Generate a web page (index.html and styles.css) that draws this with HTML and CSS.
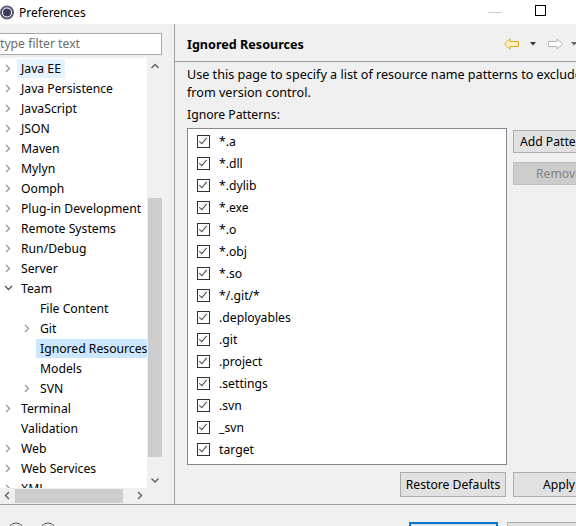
FILE: index.html
```html
<!DOCTYPE html>
<html>
<head>
<meta charset="utf-8">
<link rel="stylesheet" href="styles.css">
</head>
<body>
<div class="titlebar">
  <svg class="appicon" width="15" height="15" viewBox="0 0 15 15">
    <circle cx="7" cy="7.5" r="7" fill="#5a5a78"/>
    <circle cx="7" cy="7.5" r="5" fill="#fff"/>
    <circle cx="7" cy="7.5" r="4" fill="#3c3c5c"/>
  </svg>
  <span class="title">Preferences</span>
  <span class="spacer"></span>
  <span class="minimize"></span>
  <span class="maximize"></span>
</div>
<div class="main">
  <div class="left">
    <div class="filter">type filter text</div>
    <div class="tree">
      <div class="viewport">
        <div class="ti"><span class="arr"><svg width="6" height="9" viewBox="0 0 6 9"><polyline points="1,1 4.5,4.5 1,8" fill="none" stroke="#9a9a9a" stroke-width="1.3"/></svg></span><span class="lbl hover">Java EE</span></div>
        <div class="ti"><span class="arr"><svg width="6" height="9" viewBox="0 0 6 9"><polyline points="1,1 4.5,4.5 1,8" fill="none" stroke="#9a9a9a" stroke-width="1.3"/></svg></span><span class="lbl">Java Persistence</span></div>
        <div class="ti"><span class="arr"><svg width="6" height="9" viewBox="0 0 6 9"><polyline points="1,1 4.5,4.5 1,8" fill="none" stroke="#9a9a9a" stroke-width="1.3"/></svg></span><span class="lbl">JavaScript</span></div>
        <div class="ti"><span class="arr"><svg width="6" height="9" viewBox="0 0 6 9"><polyline points="1,1 4.5,4.5 1,8" fill="none" stroke="#9a9a9a" stroke-width="1.3"/></svg></span><span class="lbl">JSON</span></div>
        <div class="ti"><span class="arr"><svg width="6" height="9" viewBox="0 0 6 9"><polyline points="1,1 4.5,4.5 1,8" fill="none" stroke="#9a9a9a" stroke-width="1.3"/></svg></span><span class="lbl">Maven</span></div>
        <div class="ti"><span class="arr"><svg width="6" height="9" viewBox="0 0 6 9"><polyline points="1,1 4.5,4.5 1,8" fill="none" stroke="#9a9a9a" stroke-width="1.3"/></svg></span><span class="lbl">Mylyn</span></div>
        <div class="ti"><span class="arr"><svg width="6" height="9" viewBox="0 0 6 9"><polyline points="1,1 4.5,4.5 1,8" fill="none" stroke="#9a9a9a" stroke-width="1.3"/></svg></span><span class="lbl">Oomph</span></div>
        <div class="ti"><span class="arr"><svg width="6" height="9" viewBox="0 0 6 9"><polyline points="1,1 4.5,4.5 1,8" fill="none" stroke="#9a9a9a" stroke-width="1.3"/></svg></span><span class="lbl">Plug-in Development</span></div>
        <div class="ti"><span class="arr"><svg width="6" height="9" viewBox="0 0 6 9"><polyline points="1,1 4.5,4.5 1,8" fill="none" stroke="#9a9a9a" stroke-width="1.3"/></svg></span><span class="lbl">Remote Systems</span></div>
        <div class="ti"><span class="arr"><svg width="6" height="9" viewBox="0 0 6 9"><polyline points="1,1 4.5,4.5 1,8" fill="none" stroke="#9a9a9a" stroke-width="1.3"/></svg></span><span class="lbl">Run/Debug</span></div>
        <div class="ti"><span class="arr"><svg width="6" height="9" viewBox="0 0 6 9"><polyline points="1,1 4.5,4.5 1,8" fill="none" stroke="#9a9a9a" stroke-width="1.3"/></svg></span><span class="lbl">Server</span></div>
        <div class="ti"><span class="arr"><svg width="9" height="6" viewBox="0 0 9 6"><polyline points="1,1 4.5,4.5 8,1" fill="none" stroke="#555" stroke-width="1.3"/></svg></span><span class="lbl">Team</span></div>
        <div class="ti l2"><span class="arr"></span><span class="lbl">File Content</span></div>
        <div class="ti l2"><span class="arr"><svg width="6" height="9" viewBox="0 0 6 9"><polyline points="1,1 4.5,4.5 1,8" fill="none" stroke="#9a9a9a" stroke-width="1.3"/></svg></span><span class="lbl">Git</span></div>
        <div class="ti l2"><span class="arr"></span><span class="lbl sel">Ignored Resources</span></div>
        <div class="ti l2"><span class="arr"></span><span class="lbl">Models</span></div>
        <div class="ti l2"><span class="arr"><svg width="6" height="9" viewBox="0 0 6 9"><polyline points="1,1 4.5,4.5 1,8" fill="none" stroke="#9a9a9a" stroke-width="1.3"/></svg></span><span class="lbl">SVN</span></div>
        <div class="ti"><span class="arr"><svg width="6" height="9" viewBox="0 0 6 9"><polyline points="1,1 4.5,4.5 1,8" fill="none" stroke="#9a9a9a" stroke-width="1.3"/></svg></span><span class="lbl">Terminal</span></div>
        <div class="ti"><span class="arr"></span><span class="lbl">Validation</span></div>
        <div class="ti"><span class="arr"><svg width="6" height="9" viewBox="0 0 6 9"><polyline points="1,1 4.5,4.5 1,8" fill="none" stroke="#9a9a9a" stroke-width="1.3"/></svg></span><span class="lbl">Web</span></div>
        <div class="ti"><span class="arr"><svg width="6" height="9" viewBox="0 0 6 9"><polyline points="1,1 4.5,4.5 1,8" fill="none" stroke="#9a9a9a" stroke-width="1.3"/></svg></span><span class="lbl">Web Services</span></div>
        <div class="ti"><span class="arr"><svg width="6" height="9" viewBox="0 0 6 9"><polyline points="1,1 4.5,4.5 1,8" fill="none" stroke="#9a9a9a" stroke-width="1.3"/></svg></span><span class="lbl">XML</span></div>
      </div>
      <div class="vscroll">
        <svg class="sarrow" width="16" height="16" viewBox="0 0 16 16"><polyline points="4.5,10 8,6.5 11.5,10" fill="none" stroke="#606060" stroke-width="1.4"/></svg>
        <div class="vtrack"><div class="vthumb"></div></div>
        <svg class="sarrow" width="16" height="16" viewBox="0 0 16 16"><polyline points="4.5,6.5 8,10 11.5,6.5" fill="none" stroke="#606060" stroke-width="1.4"/></svg>
      </div>
      <div class="hscroll">
        <svg class="sarrow" width="15" height="15" viewBox="0 0 15 15"><polyline points="9,4 5.5,7.5 9,11" fill="none" stroke="#606060" stroke-width="1.4"/></svg>
        <div class="htrack"><div class="hthumb"></div></div>
        <svg class="sarrow" width="15" height="15" viewBox="0 0 15 15"><polyline points="6,4 9.5,7.5 6,11" fill="none" stroke="#606060" stroke-width="1.4"/></svg>
      </div>
      <div class="corner"></div>
    </div>
  </div>
  <div class="right">
    <div class="header">
      <span class="htitle">Ignored Resources</span>
      <span class="nav">
        <svg width="16" height="12" viewBox="0 0 16 12"><path d="M0.5 6 L6 0.8 L6 3.5 L14.5 3.5 L14.5 8.5 L6 8.5 L6 11.2 Z" fill="#fff3c4" stroke="#d8a82a" stroke-width="1"/></svg>
        <svg class="drop" width="6" height="4" viewBox="0 0 6 4"><path d="M0 0 L6 0 L3 3.5 Z" fill="#333"/></svg>
        <svg class="fwd" width="16" height="12" viewBox="0 0 16 12"><path d="M15.5 6 L10 0.8 L10 3.5 L1.5 3.5 L1.5 8.5 L10 8.5 L10 11.2 Z" fill="#fff" stroke="#b4b4b4" stroke-width="1"/></svg>
        <svg class="drop" width="6" height="4" viewBox="0 0 6 4"><path d="M0 0 L6 0 L3 3.5 Z" fill="#666"/></svg>
      </span>
    </div>
    <div class="content">
      <p class="desc">Use this page to specify a list of resource name patterns to exclude<br>from version control.</p>
      <p class="label">Ignore Patterns:</p>
      <div class="listrow">
        <div class="list">
          <div class="item"><span class="cb"></span>*.a</div>
          <div class="item"><span class="cb"></span>*.dll</div>
          <div class="item"><span class="cb"></span>*.dylib</div>
          <div class="item"><span class="cb"></span>*.exe</div>
          <div class="item"><span class="cb"></span>*.o</div>
          <div class="item"><span class="cb"></span>*.obj</div>
          <div class="item"><span class="cb"></span>*.so</div>
          <div class="item"><span class="cb"></span>*/.git/*</div>
          <div class="item"><span class="cb"></span>.deployables</div>
          <div class="item"><span class="cb"></span>.git</div>
          <div class="item"><span class="cb"></span>.project</div>
          <div class="item"><span class="cb"></span>.settings</div>
          <div class="item"><span class="cb"></span>.svn</div>
          <div class="item"><span class="cb"></span>_svn</div>
          <div class="item"><span class="cb"></span>target</div>
        </div>
        <div class="sidebtns">
          <div class="btn wide">Add Pattern...</div>
          <div class="btn wide disabled">Remove</div>
        </div>
      </div>
      <div class="bottombtns">
        <div class="btn restore">Restore Defaults</div>
        <div class="btn wide">Apply</div>
      </div>
    </div>
  </div>
</div>
<div class="footer">
  <svg class="ficon" width="18" height="18" viewBox="0 0 18 18"><circle cx="9" cy="9" r="8" fill="none" stroke="#555" stroke-width="1"/></svg>
  <svg class="ficon" width="18" height="18" viewBox="0 0 18 18"><circle cx="9" cy="9" r="8" fill="none" stroke="#555" stroke-width="1"/></svg>
  <span class="spacer"></span>
  <div class="fbtn primary"></div>
  <div class="fbtn"></div>
</div>
</body>
</html>
```

FILE: styles.css
```css
html, body {
  margin: 0;
  padding: 0;
}
body {
  width: 576px;
  height: 526px;
  overflow: hidden;
  background: #f0f0f0;
  font-family: "Noto Sans", "Open Sans", sans-serif;
  font-size: 12.2px;
  color: #000;
}
.titlebar {
  height: 24px;
  background: #fff;
  display: flex;
  align-items: center;
}
.appicon {
  margin-left: 0;
  flex: none;
}
.title {
  margin-left: 4px;
  font-size: 12px;
}
.spacer {
  flex: 1;
}
.minimize {
  width: 14px;
  height: 1px;
  background: #d0d0d0;
  margin-right: 33px;
  margin-top: 1px;
}
.maximize {
  width: 9px;
  height: 9px;
  border: 1px solid #000;
  margin-right: 30px;
  margin-top: -4px;
}
.main {
  display: flex;
  height: 480px;
}
.left {
  width: 174px;
  flex: none;
  padding-top: 9px;
  box-sizing: border-box;
}
.filter {
  margin-left: -4px;
  width: 166px;
  height: 22px;
  box-sizing: border-box;
  border: 1px solid #a8a8a8;
  background: #fff;
  color: #6d6d6d;
  padding-left: 3px;
  line-height: 20px;
  white-space: nowrap;
  overflow: hidden;
}
.tree {
  margin-top: 3px;
  width: 163px;
  height: 446px;
  display: grid;
  grid-template-columns: 147px 16px;
  grid-template-rows: 430px 16px;
  background: #fff;
}
.viewport {
  overflow: hidden;
}
.ti {
  height: 20px;
  display: flex;
  align-items: center;
  white-space: nowrap;
}
.ti.l2 {
  padding-left: 19px;
}
.arr {
  width: 17px;
  flex: none;
  display: flex;
  justify-content: center;
  align-items: center;
  height: 20px;
  padding-right: 1px;
  box-sizing: border-box;
}
.lbl {
  padding: 0 4px;
  height: 19px;
  line-height: 19px;
}
.lbl.hover {
  background: #e5f3ff;
}
.lbl.sel {
  background: #cce8ff;
  padding-right: 20px;
}
.vscroll {
  background: #f0f0f0;
  display: flex;
  flex-direction: column;
}
.sarrow {
  flex: none;
  display: block;
}
.vtrack {
  flex: 1;
  display: flex;
  flex-direction: column;
  padding-top: 124px;
}
.vthumb {
  margin: 0 1px;
  height: 259px;
  background: #cdcdcd;
}
.hscroll {
  background: #f0f0f0;
  display: flex;
  align-items: stretch;
}
.htrack {
  flex: 1;
  display: flex;
  padding: 1px 0;
}
.hthumb {
  width: 108px;
  background: #cdcdcd;
}
.corner {
  background: #f0f0f0;
}
.right {
  width: 402px;
  flex: none;
  border-left: 1px solid #a0a0a0;
  display: flex;
  flex-direction: column;
}
.header {
  height: 38px;
  border-bottom: 1px solid #a0a0a0;
  display: flex;
  align-items: center;
  padding-left: 12px;
  padding-top: 4px;
  box-sizing: border-box;
}
.htitle {
  font-weight: bold;
  font-size: 12.6px;
}
.nav {
  margin-left: auto;
  display: flex;
  align-items: center;
  margin-top: -1px;
}
.nav .drop {
  margin-left: 10px;
  margin-right: 10px;
}
.nav .fwd {
  margin-left: 1px;
}
.nav .drop:last-child {
  margin-right: 0;
  margin-left: 8px;
}
.content {
  padding-left: 12px;
  display: flex;
  flex-direction: column;
}
.desc {
  margin: 4px 0 0 0;
  line-height: 18px;
  white-space: nowrap;
  font-size: 12.6px;
}
.label {
  margin: 4px 0 0 0;
  line-height: 18px;
}
.listrow {
  margin-top: 4px;
  display: flex;
  align-items: flex-start;
}
.list {
  width: 320px;
  height: 337px;
  box-sizing: border-box;
  border: 1px solid #828790;
  background: #fff;
  padding-top: 1px;
  flex: none;
}
.item {
  height: 22px;
  display: flex;
  align-items: center;
  padding-left: 9px;
}
.cb {
  width: 13px;
  height: 13px;
  box-sizing: border-box;
  border: 1px solid #333;
  margin-right: 9px;
  position: relative;
  flex: none;
}
.cb::after {
  content: "";
  position: absolute;
  left: 3px;
  top: 0px;
  width: 3px;
  height: 7px;
  border-right: 1.3px solid #444;
  border-bottom: 1.3px solid #444;
  transform: rotate(40deg);
}
.sidebtns {
  margin-left: 6px;
  padding-top: 2px;
  display: flex;
  flex-direction: column;
  gap: 9px;
}
.btn {
  height: 23px;
  box-sizing: border-box;
  border: 1px solid #adadad;
  background: #e1e1e1;
  line-height: 21px;
  text-align: center;
  white-space: nowrap;
  flex: none;
}
.btn.wide {
  width: 92px;
}
.btn.disabled {
  background: #cccccc;
  border-color: #bfbfbf;
  color: #838383;
}
.bottombtns {
  display: flex;
  margin-top: 7px;
  margin-left: 213px;
  gap: 7px;
  height: 24px;
}
.bottombtns .btn {
  height: 25px;
  line-height: 23px;
}
.btn.restore {
  width: 106px;
}
.footer {
  border-top: 1px solid #a0a0a0;
  height: 21px;
  display: flex;
  align-items: flex-start;
}
.ficon {
  margin-top: 17px;
  margin-left: 7px;
  flex: none;
}
.ficon + .ficon {
  margin-left: 14px;
}
.fbtn {
  width: 89px;
  height: 24px;
  box-sizing: border-box;
  border: 1px solid #adadad;
  background: #e1e1e1;
  margin-top: 17px;
  margin-right: -20px;
  flex: none;
}
.fbtn.primary {
  border: 2px solid #0078d7;
  margin-right: 9px;
}
```
